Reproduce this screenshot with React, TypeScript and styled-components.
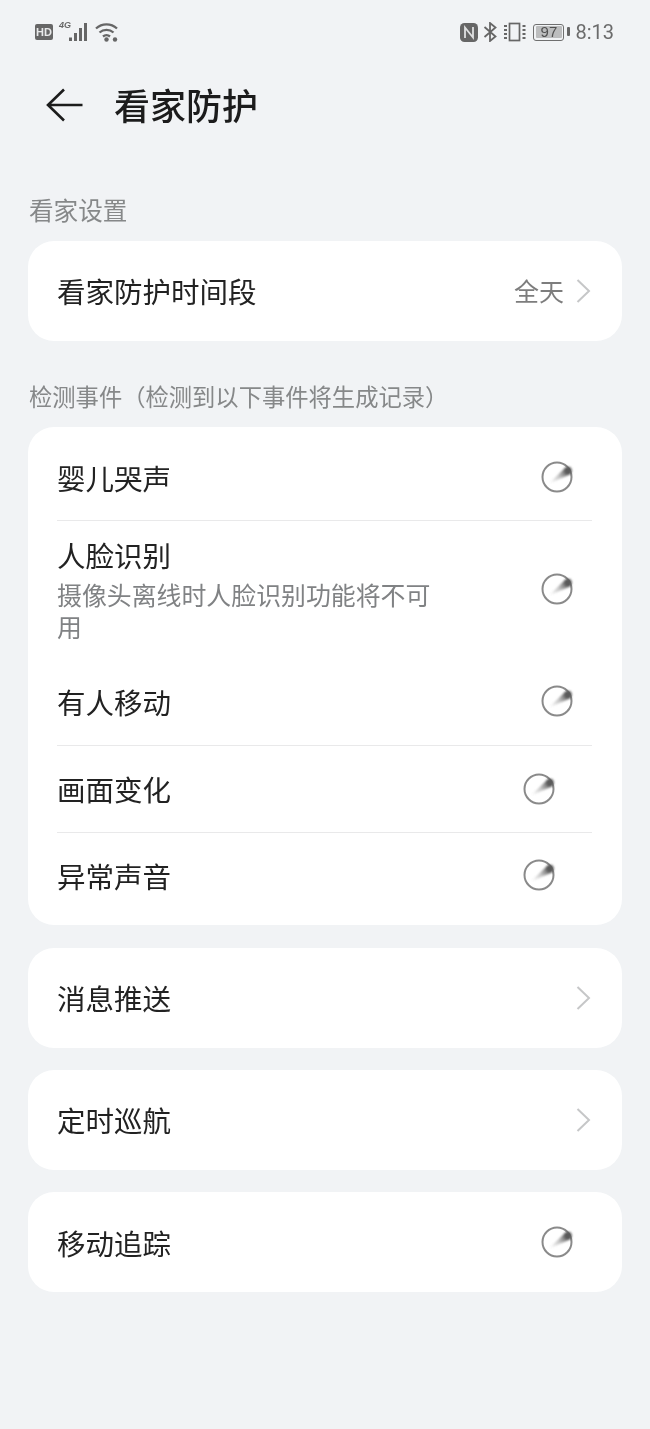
import React from "react";
import styled, { createGlobalStyle } from "styled-components";

const GlobalStyle = createGlobalStyle`
  html, body {
    margin: 0;
    padding: 0;
    background: #f1f3f5;
    font-family: "Noto Sans CJK SC", "Noto Sans", sans-serif;
  }
`;

const Page = styled.div`
  width: 650px;
  height: 1429px;
  overflow: hidden;
  background: #f1f3f5;
  filter: blur(0.5px);
`;

const StatusBar = styled.div`
  height: 64px;
  padding: 0 36px 0 35px;
  display: flex;
  align-items: center;
  justify-content: space-between;
  color: #666;
`;

const StatusGroup = styled.div`
  display: flex;
  align-items: center;
`;

const HdBadge = styled.span`
  width: 18px;
  height: 16px;
  border-radius: 2px;
  background: #666;
  color: #e8e9ea;
  font: 700 11px/16px "Liberation Sans", sans-serif;
  text-align: center;
  margin-right: 6px;
`;

const SignalWrap = styled.div`
  position: relative;
  display: flex;
`;

const NetworkTag = styled.span`
  position: absolute;
  left: 0;
  top: -2px;
  font: italic 700 9px/10px "Liberation Sans", sans-serif;
  color: #666;
`;

const Battery = styled.div`
  width: 31px;
  height: 17px;
  box-sizing: border-box;
  border: 1.5px solid #6f6f6f;
  border-radius: 3px;
  padding: 1.5px;
  display: flex;
  position: relative;
  margin-left: 7px;
  &::after {
    content: "";
    position: absolute;
    right: -7px;
    top: 2.5px;
    width: 3px;
    height: 9px;
    background: #666;
    border-radius: 1px;
  }
`;

const BatteryLevel = styled.span`
  flex: 1;
  background: #bcbdbe;
  border-radius: 1px;
  color: #505050;
  font: 15px/11px "Liberation Sans", sans-serif;
  text-align: center;
`;

const Clock = styled.span`
  font: 20px/24px "Roboto", "Liberation Sans", sans-serif;
  margin-left: 11px;
  color: #6b6b6b;
`;

const Header = styled.div`
  height: 82px;
  padding-left: 46px;
  display: flex;
  align-items: center;
  gap: 31px;
`;

const Title = styled.h1`
  margin: 0 0 2px;
  font-size: 36px;
  line-height: 48px;
  font-weight: 500;
  color: #1c1c1c;
`;

const SectionLabel = styled.div<{ $top: number; $size: number }>`
  margin: ${(p) => p.$top}px 0 0 29px;
  height: 36px;
  font-size: ${(p) => p.$size}px;
  line-height: 36px;
  color: #868889;
  white-space: nowrap;
`;

const Card = styled.div<{ $top?: number; $inset?: number; $insetBottom?: number }>`
  margin: ${(p) => p.$top ?? 0}px 28px 0;
  padding: ${(p) => p.$inset ?? 0}px 30px ${(p) => p.$insetBottom ?? 0}px 29px;
  background: #fff;
  border-radius: 26px;
`;

const Row = styled.div<{ $height: number; $divider?: boolean }>`
  height: ${(p) => p.$height}px;
  box-sizing: border-box;
  display: flex;
  align-items: center;
  justify-content: space-between;
  border-bottom: ${(p) => (p.$divider ? "1.5px solid #e9e9ea" : "none")};
`;

const RowText = styled.div`
  width: 380px;
  padding-bottom: 3px;
`;

const RowTitle = styled.div<{ $low?: boolean; $high?: boolean }>`
  font-size: 28.5px;
  line-height: 40px;
  color: #222;
  white-space: nowrap;
  padding-top: ${(p) => (p.$low ? 2 : 0)}px;
  padding-bottom: ${(p) => (p.$high ? 2 : 0)}px;
`;

const FaceTitle = styled(RowTitle)`
  margin-bottom: 3px;
  margin-top: -2px;
`;

const RowHint = styled.div`
  font-size: 24.9px;
  line-height: 32px;
  color: #808284;
`;

const RowValue = styled.div`
  display: flex;
  align-items: center;
  gap: 12px;
  font-size: 25px;
  color: #7d7d7d;
`;

const RowValueText = styled.span`
  margin-bottom: 2px;
`;

const SpinnerIcon = styled.svg<{ $shift?: number; $lift?: number }>`
  display: block;
  margin-right: ${(p) => 17 + (p.$shift ?? 0)}px;
  margin-bottom: ${(p) => p.$lift ?? 0}px;
`;

const Chevron = () => (
  <svg width="16" height="26" viewBox="0 0 16 26" fill="none">
    <path d="M1.500 2l11.500 11L1.500 24" stroke="#c6c7c8" strokeWidth="2" />
  </svg>
);

const Spinner = ({ shift, lift, id }: { shift?: number; lift?: number; id: string }) => (
  <SpinnerIcon $shift={shift} $lift={lift} width="36" height="36" viewBox="0 0 36 36" fill="none">
    <defs>
      <linearGradient id={id} x1="10" y1="24" x2="29" y2="11.500" gradientUnits="userSpaceOnUse">
        <stop offset="0" stopColor="#777" stopOpacity="0" />
        <stop offset="0.5" stopColor="#777" stopOpacity="0.4" />
        <stop offset="0.85" stopColor="#666" stopOpacity="0.9" />
        <stop offset="1" stopColor="#555" />
      </linearGradient>
      <filter id={`${id}-soft`} x="-30%" y="-30%" width="160%" height="160%">
        <feGaussianBlur stdDeviation="0.8" />
      </filter>
    </defs>
    <circle cx="18" cy="18" r="14.500" stroke="#8a8a8a" strokeWidth="2" />
    <g filter={`url(#${id}-soft)`}>
      <path d="M10 24.500L27 8L32 15Z" fill={`url(#${id})`} />
      <circle cx="29" cy="11.500" r="3.800" fill="#5a5a5a" />
    </g>
  </SpinnerIcon>
);

const BackArrow = () => (
  <svg width="37" height="34" viewBox="0 0 37 34" fill="none">
    <path d="M36.500 17H2M18 1.500L2 17l16 15.500" stroke="#1c1c1c" strokeWidth="2.600" />
  </svg>
);

const SignalIcon = () => (
  <svg width="32" height="20" viewBox="0 0 32 20" fill="#666">
    <rect x="10" y="15.500" width="3" height="3.500" />
    <rect x="15" y="11" width="3" height="8" />
    <rect x="20" y="6" width="3" height="13" />
    <rect x="25" y="1" width="3" height="18" />
  </svg>
);

const WifiIcon = () => (
  <svg width="24" height="20" viewBox="0 0 24 20" fill="none" style={{ marginLeft: 4 }}>
    <path d="M1 6.500c6-5.500 15-5.500 21 0M4.500 10.500c4-3.600 10-3.600 14 0M8 14.500c2-1.700 5-1.700 7 0" stroke="#666" strokeWidth="2.300" />
    <circle cx="11.500" cy="17.500" r="2.200" fill="#666" />
    <circle cx="20" cy="17.500" r="2.200" fill="#666" />
  </svg>
);

const NfcIcon = () => (
  <svg width="18" height="19" viewBox="0 0 18 19">
    <rect width="18" height="19" rx="4.500" fill="#666" />
    <path d="M5 15V4.500l8 10V4" stroke="#dfe0e1" strokeWidth="1.800" fill="none" />
  </svg>
);

const BluetoothIcon = () => (
  <svg width="14" height="20" viewBox="0 0 14 20" fill="none" style={{ marginLeft: 5 }}>
    <path d="M1.500 5l11 9.500L7 19V1l5.500 4.500L1.500 15" stroke="#666" strokeWidth="1.800" />
  </svg>
);

const VibrateIcon = () => (
  <svg width="22" height="20" viewBox="0 0 22 20" fill="none" style={{ marginLeft: 7 }}>
    <rect x="5.500" y="1.500" width="10" height="17" stroke="#666" strokeWidth="1.700" />
    <path d="M1.500 3v14M20 3v14" stroke="#666" strokeWidth="3" strokeDasharray="2 2" />
  </svg>
);

const App = () => {
  return (
    <Page>
      <GlobalStyle />
      <StatusBar>
        <StatusGroup>
          <HdBadge>HD</HdBadge>
          <SignalWrap>
            <NetworkTag>4G</NetworkTag>
            <SignalIcon />
          </SignalWrap>
          <WifiIcon />
        </StatusGroup>
        <StatusGroup>
          <NfcIcon />
          <BluetoothIcon />
          <VibrateIcon />
          <Battery>
            <BatteryLevel>97</BatteryLevel>
          </Battery>
          <Clock>8:13</Clock>
        </StatusGroup>
      </StatusBar>

      <Header>
        <BackArrow />
        <Title>看家防护</Title>
      </Header>

      <SectionLabel $top={45} $size={24.6}>看家设置</SectionLabel>
      <Card $top={14}>
        <Row $height={100}>
          <RowTitle>看家防护时间段</RowTitle>
          <RowValue>
            <RowValueText>全天</RowValueText>
            <Chevron />
          </RowValue>
        </Row>
      </Card>

      <SectionLabel $top={37} $size={23.3}>检测事件（检测到以下事件将生成记录）</SectionLabel>
      <Card $top={13} $inset={6} $insetBottom={7}>
        <Row $height={88} $divider>
          <RowTitle $low>婴儿哭声</RowTitle>
          <Spinner id="s1" />
        </Row>
        <Row $height={140}>
          <RowText>
            <FaceTitle>人脸识别</FaceTitle>
            <RowHint>摄像头离线时人脸识别功能将不可用</RowHint>
          </RowText>
          <Spinner id="s2" lift={4} />
        </Row>
        <Row $height={85} $divider>
          <RowTitle $high>有人移动</RowTitle>
          <Spinner id="s3" lift={4} />
        </Row>
        <Row $height={87} $divider>
          <RowTitle>画面变化</RowTitle>
          <Spinner id="s4" shift={18} />
        </Row>
        <Row $height={85}>
          <RowTitle>异常声音</RowTitle>
          <Spinner id="s5" shift={18} lift={2} />
        </Row>
      </Card>

      <Card $top={23}>
        <Row $height={100}>
          <RowTitle>消息推送</RowTitle>
          <Chevron />
        </Row>
      </Card>
      <Card $top={22}>
        <Row $height={100}>
          <RowTitle>定时巡航</RowTitle>
          <Chevron />
        </Row>
      </Card>
      <Card $top={22}>
        <Row $height={100}>
          <RowTitle $low>移动追踪</RowTitle>
          <Spinner id="s6" />
        </Row>
      </Card>
    </Page>
  );
};

export default App;
